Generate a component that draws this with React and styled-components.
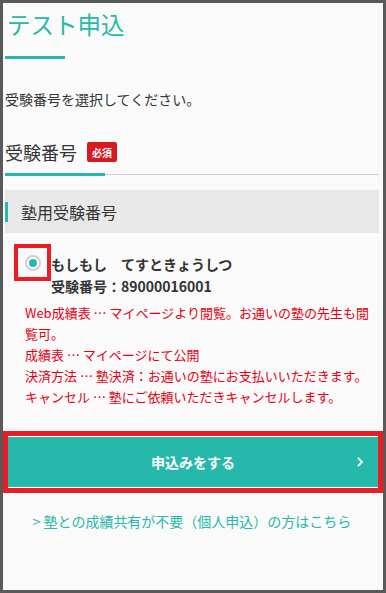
import styled, { createGlobalStyle } from "styled-components";

const TEAL = "#26b8aa";

const GlobalStyle = createGlobalStyle`
  html, body {
    margin: 0;
    padding: 0;
    background: #595959;
  }
  body {
    font-family: "Noto Sans CJK JP", "Noto Sans", sans-serif;
    color: #333;
  }
`;

const Frame = styled.div`
  box-sizing: border-box;
  width: 386px;
  height: 593px;
  border: 3px solid #595959;
  background: #fafafa;
  padding: 0 4px 0 2px;
  overflow: hidden;
`;

const Title = styled.h1`
  margin: 3px 0 0 2px;
  font-size: 23.5px;
  line-height: 36px;
  font-weight: 400;
  color: ${TEAL};
`;

const TitleBar = styled.div`
  width: 60px;
  height: 3px;
  margin-top: 14px;
  background: ${TEAL};
`;

const Lead = styled.p`
  margin: 30px 0 0;
  font-size: 14px;
  line-height: 21px;
`;

const HeadingRow = styled.div`
  display: flex;
  align-items: center;
  margin-top: 27px;
  height: 30px;
`;

const Heading = styled.h2`
  margin: 0;
  font-size: 18px;
  line-height: 30px;
  font-weight: 400;
`;

const Badge = styled.span`
  display: inline-flex;
  align-items: center;
  justify-content: center;
  margin-left: 10px;
  width: 30px;
  height: 20px;
  border-radius: 2px;
  background: #d71920;
  color: #fff;
  font-size: 10px;
  font-weight: 700;
`;

const Divider = styled.div`
  display: flex;
  align-items: center;
  margin-top: 6px;
  height: 3px;
  &::before {
    content: "";
    width: 100px;
    height: 3px;
    background: ${TEAL};
  }
  &::after {
    content: "";
    flex: 1;
    height: 1px;
    background: #cfcfcf;
  }
`;

const GroupHead = styled.div`
  display: flex;
  align-items: center;
  margin-top: 14px;
  height: 43px;
  background: #e8e8e8;
`;

const GroupLabel = styled.span`
  border-left: 3px solid ${TEAL};
  padding-left: 13px;
  font-size: 16px;
  line-height: 20px;
  color: #333;
`;

const Option = styled.label`
  display: flex;
  align-items: flex-start;
  margin-top: 11px;
`;

const Highlight = styled.span`
  box-sizing: border-box;
  display: flex;
  align-items: center;
  justify-content: center;
  flex-shrink: 0;
  width: 37px;
  height: 37px;
  margin-left: 9px;
  border: 4px solid #ec1c24;
`;

const Radio = styled.span`
  box-sizing: border-box;
  display: flex;
  align-items: center;
  justify-content: center;
  width: 16px;
  height: 16px;
  border-radius: 50%;
  border: 2px solid #d0d0d0;
  background: #fff;
  &::after {
    content: "";
    width: 8px;
    height: 8px;
    border-radius: 50%;
    background: ${TEAL};
  }
`;

const OptionText = styled.div`
  padding-top: 9px;
  font-size: 14px;
  line-height: 22px;
  font-weight: 700;
  color: #333;
  white-space: pre;
`;

const Notes = styled.div`
  margin-top: 5px;
  padding-left: 20px;
  width: 350px;
  font-size: 13px;
  line-height: 21px;
  color: #e60012;
`;

const ButtonFrame = styled.div`
  margin: 24px -4px 0 -2px;
  border: 5px solid #ec1c24;
`;

const SubmitButton = styled.button`
  position: relative;
  display: flex;
  align-items: center;
  justify-content: center;
  width: 100%;
  height: 52px;
  border: 0;
  border-top: 1px solid #fff;
  border-bottom: 1px solid #fff;
  background: ${TEAL};
  color: #fff;
  font-family: inherit;
  font-size: 14px;
  font-weight: 700;
  cursor: pointer;
  svg {
    position: absolute;
    right: 15px;
    top: 50%;
    transform: translateY(-50%);
  }
`;

const AltLink = styled.a`
  display: block;
  margin-top: 17px;
  text-align: center;
  font-size: 14px;
  line-height: 22px;
  color: ${TEAL};
  text-decoration: none;
`;

export default function App() {
  return (
    <>
      <GlobalStyle />
      <Frame>
        <Title>テスト申込</Title>
        <TitleBar />
        <Lead>受験番号を選択してください。</Lead>

        <HeadingRow>
          <Heading>受験番号</Heading>
          <Badge>必須</Badge>
        </HeadingRow>
        <Divider />

        <GroupHead>
          <GroupLabel>塾用受験番号</GroupLabel>
        </GroupHead>

        <Option>
          <Highlight>
            <Radio />
          </Highlight>
          <OptionText>
            {"もしもし　てすときょうしつ\n受験番号：89000016001"}
          </OptionText>
        </Option>

        <Notes>
          <div>Web成績表 … マイページより閲覧。お通いの塾の先生も閲覧可。</div>
          <div>成績表 … マイページにて公開</div>
          <div>決済方法 … 塾決済：お通いの塾にお支払いいただきます。</div>
          <div>キャンセル … 塾にご依頼いただきキャンセルします。</div>
        </Notes>

        <ButtonFrame>
          <SubmitButton type="button">
            申込みをする
            <svg width="6" height="10" viewBox="0 0 6 10">
              <polyline points="1,1 5,5 1,9" fill="none" stroke="#fff" strokeWidth="1.8" />
            </svg>
          </SubmitButton>
        </ButtonFrame>

        <AltLink href="#">&gt; 塾との成績共有が不要（個人申込）の方はこちら</AltLink>
      </Frame>
    </>
  );
}
